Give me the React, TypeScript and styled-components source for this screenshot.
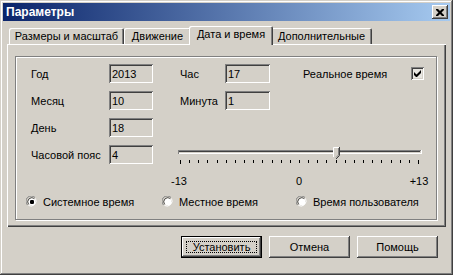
import React from 'react'
import styled, { createGlobalStyle } from 'styled-components'

const FACE = '#d4d0c8'
const SHADOW = '#808080'
const DARK = '#404040'

const tabs = [
  { label: 'Размеры и масштаб', width: 115 },
  { label: 'Движение', width: 67 },
  { label: 'Дата и время', width: 80 },
  { label: 'Дополнительные', width: 101 },
]
const activeTab = 2

const fields = [
  { label: 'Год', value: '2013' },
  { label: 'Месяц', value: '10' },
  { label: 'День', value: '18' },
  { label: 'Часовой пояс', value: '4' },
]

const TICKS = 27
const TICK_SPAN = 238
const SLIDER_VALUE = 4

function Slider() {
  const tickX = (i: number) => 2 + Math.round((i * TICK_SPAN) / (TICKS - 1))
  const tx = tickX(SLIDER_VALUE + 13)
  return (
    <SliderBox>
      <svg width="246" height="20" viewBox="0 0 246 20">
        <rect x="0" y="5" width="243" height="1" fill={SHADOW} />
        <rect x="1" y="6" width="241" height="1" fill={DARK} />
        <rect x="0" y="8" width="244" height="1" fill="#fff" />
        <rect x="0" y="5" width="1" height="4" fill={SHADOW} />
        <rect x="243" y="5" width="1" height="4" fill="#fff" />
        {Array.from({ length: TICKS }, (_, i) => {
          const end = i === 0 || i === TICKS - 1
          return <rect key={i} x={tickX(i)} y="15" width="1" height={end ? 4 : 3} fill="#000" />
        })}
        <polygon points={`${tx - 3},2 ${tx + 3},2 ${tx + 3},10 ${tx},13 ${tx - 3},10`} fill={FACE} />
        <polyline points={`${tx - 2.5},12 ${tx - 2.5},2.5 ${tx + 3},2.5`} fill="none" stroke="#fff" />
        <polyline points={`${tx + 3.5},2 ${tx + 3.5},10.5 ${tx},14`} fill="none" stroke={DARK} />
        <polyline points={`${tx + 2.5},3 ${tx + 2.5},10 ${tx},12.5`} fill="none" stroke={SHADOW} />
      </svg>
    </SliderBox>
  )
}

function Radio({ checked, label }: { checked?: boolean; label: string }) {
  return (
    <RadioItem>
      <svg width="12" height="12" viewBox="0 0 12 12">
        <path d="M1.5 9 A5 5 0 0 1 9 1.5" fill="none" stroke={SHADOW} />
        <path d="M2.6 8.2 A4 4 0 0 1 8.2 2.6" fill="none" stroke={DARK} />
        <path d="M9.5 2.5 A5.2 5.2 0 0 1 2.5 9.5" fill="none" stroke="#fff" />
        <path d="M8.6 3.4 A4.2 4.2 0 0 1 3.4 8.6" fill="none" stroke={FACE} />
        <circle cx="6" cy="6" r="3.4" fill="#fff" />
        {checked && <rect x="4" y="4" width="4" height="4" rx="1.2" fill="#000" />}
      </svg>
      {label}
    </RadioItem>
  )
}

export default function App() {
  return (
    <>
      <GlobalStyle />
      <Window>
        <TitleBar>
          <Title>Параметры</Title>
          <CloseButton>
            <svg width="8" height="7" viewBox="0 0 8 7">
              <path d="M0 0h2l2 2 2-2h2v1L5.5 3.5 8 6v1H6L4 5 2 7H0V6l2.5-2.5L0 1z" fill="#000" />
            </svg>
          </CloseButton>
        </TitleBar>
        <Body>
          <TabStrip>
            {tabs.map((t, i) => (
              <Tab key={t.label} $w={t.width} $active={i === activeTab}>
                {t.label}
              </Tab>
            ))}
          </TabStrip>
          <Panel>
            <GroupBox>
              <FieldGrid>
                {fields.map((f, i) => (
                  <React.Fragment key={f.label}>
                    <Label style={{ gridRow: i + 1 }}>{f.label}</Label>
                    <Field style={{ gridRow: i + 1 }}>{f.value}</Field>
                  </React.Fragment>
                ))}
                <Label $col={4} style={{ gridRow: 1 }}>Час</Label>
                <Field $col={5} style={{ gridRow: 1 }}>17</Field>
                <Label $col={4} style={{ gridRow: 2 }}>Минута</Label>
                <Field $col={5} style={{ gridRow: 2 }}>1</Field>
                <Label $col={7} style={{ gridRow: 1 }}>Реальное время</Label>
                <CheckBox>
                  <svg width="7" height="7" viewBox="0 0 7 7">
                    <path d="M0 2v3l2 2h1l4-4V0L2.5 4.5z" fill="#000" />
                  </svg>
                </CheckBox>
                <Slider />
              </FieldGrid>
              <ScaleRow>
                <ScaleLabel>-13</ScaleLabel>
                <ScaleLabel>0</ScaleLabel>
                <ScaleLabel>+13</ScaleLabel>
              </ScaleRow>
              <RadioRow>
                <Radio checked label="Системное время" />
                <Radio label="Местное время" />
                <Radio label="Время пользователя" />
              </RadioRow>
            </GroupBox>
          </Panel>
          <ButtonRow>
            <Button $default>
              <FocusRect>Установить</FocusRect>
            </Button>
            <Button>Отмена</Button>
            <Button>Помощь</Button>
          </ButtonRow>
        </Body>
      </Window>
    </>
  )
}

const GlobalStyle = createGlobalStyle`
  html, body {
    margin: 0;
    padding: 0;
    background: ${FACE};
  }
  body {
    font-family: 'Liberation Sans', Arial, sans-serif;
    font-size: 11px;
    color: #000;
  }
`

const Window = styled.div`
  box-sizing: border-box;
  width: 453px;
  height: 275px;
  padding: 3px;
  background: ${FACE};
  box-shadow: inset -1px -1px ${DARK}, inset 1px 1px ${FACE}, inset -2px -2px ${SHADOW}, inset 2px 2px #fff;
  display: flex;
  flex-direction: column;
`

const TitleBar = styled.div`
  height: 18px;
  display: flex;
  align-items: center;
  justify-content: space-between;
  padding: 0 2px 0 3px;
  background: linear-gradient(to right, #0a246a, #a6caf0);
`

const Title = styled.div`
  color: #fff;
  font-weight: bold;
  font-size: 12px;
`

const CloseButton = styled.div`
  box-sizing: border-box;
  width: 16px;
  height: 14px;
  display: flex;
  align-items: center;
  justify-content: center;
  background: ${FACE};
  box-shadow: inset -1px -1px ${DARK}, inset 1px 1px #fff, inset -2px -2px ${SHADOW};
`

const Body = styled.div`
  padding: 5px 4px 0;
  display: flex;
  flex-direction: column;
`

const TabStrip = styled.div`
  height: 18px;
  display: flex;
  align-items: flex-end;
  padding-left: 2px;
  position: relative;
  z-index: 1;
`

const Tab = styled.div<{ $w: number; $active?: boolean }>`
  box-sizing: border-box;
  width: ${(p) => p.$w + (p.$active ? 4 : 0)}px;
  height: ${(p) => (p.$active ? 19 : 16)}px;
  margin: ${(p) => (p.$active ? '0 -2px -1px' : '0')};
  padding-bottom: ${(p) => (p.$active ? 3 : 0)}px;
  display: flex;
  align-items: center;
  justify-content: center;
  white-space: nowrap;
  background: ${FACE};
  border-radius: 2px 2px 0 0;
  box-shadow: inset 1px 1px #fff, inset -1px 0 ${DARK}, inset -2px 0 ${SHADOW};
  position: relative;
  z-index: ${(p) => (p.$active ? 2 : 1)};
`

const Panel = styled.div`
  box-sizing: border-box;
  height: 183px;
  padding: 12px 9px 7px 8px;
  box-shadow: inset 1px 1px #fff, inset -1px -1px ${DARK}, inset -2px -2px ${SHADOW};
  position: relative;
  z-index: 0;
`

const GroupBox = styled.div`
  box-sizing: border-box;
  height: 164px;
  padding: 7px 0 0 10px;
  border: 1px solid ${SHADOW};
  box-shadow: inset 1px 1px #fff, 1px 1px #fff;
`

const FieldGrid = styled.div`
  margin-left: 5px;
  display: grid;
  grid-template-columns: 78px 44px 27px 45px 45px 33px 108px 13px;
  grid-template-rows: repeat(4, 19px);
  row-gap: 8px;
  align-items: center;
`

const Label = styled.div<{ $col?: number }>`
  grid-column: ${(p) => p.$col ?? 1};
  white-space: nowrap;
`

const Field = styled.div<{ $col?: number }>`
  grid-column: ${(p) => p.$col ?? 2};
  box-sizing: border-box;
  height: 19px;
  padding: 0 3px;
  display: flex;
  align-items: center;
  background: ${FACE};
  box-shadow: inset 1px 1px ${SHADOW}, inset -1px -1px #fff, inset 2px 2px ${DARK}, inset -2px -2px ${FACE};
`

const CheckBox = styled.div`
  grid-column: 8;
  grid-row: 1;
  box-sizing: border-box;
  width: 13px;
  height: 13px;
  display: flex;
  align-items: center;
  justify-content: center;
  background: #e8e6e1;
  box-shadow: inset 1px 1px ${SHADOW}, inset -1px -1px #fff, inset 2px 2px ${DARK}, inset -2px -2px ${FACE};
`

const SliderBox = styled.div`
  grid-column: 4 / 9;
  grid-row: 4;
  align-self: start;
  margin-left: -2px;
  height: 19px;
  svg {
    display: block;
  }
`

const ScaleRow = styled.div`
  margin: 11px 0 0 138px;
  width: 270px;
  display: flex;
  justify-content: space-between;
`

const ScaleLabel = styled.div`
  width: 30px;
  text-align: center;
  line-height: 13px;
`

const RadioRow = styled.div`
  margin-top: 7px;
  display: grid;
  grid-template-columns: 136px 134px auto;
  height: 14px;
  align-items: center;
`

const RadioItem = styled.div`
  display: flex;
  align-items: center;
  gap: 5px;
  white-space: nowrap;
  svg {
    display: block;
  }
`

const ButtonRow = styled.div`
  margin-top: 9px;
  padding-right: 8px;
  display: flex;
  justify-content: flex-end;
  gap: 7px;
`

const Button = styled.div<{ $default?: boolean }>`
  box-sizing: border-box;
  width: 81px;
  height: 22px;
  display: flex;
  align-items: center;
  justify-content: center;
  padding: ${(p) => (p.$default ? '4px' : '0')};
  background: ${FACE};
  border: ${(p) => (p.$default ? '1px solid #000' : 'none')};
  box-shadow: inset -1px -1px ${DARK}, inset 1px 1px #fff, inset -2px -2px ${SHADOW}, inset 2px 2px ${FACE};
`

const FocusRect = styled.div`
  flex: 1;
  align-self: stretch;
  display: flex;
  align-items: center;
  justify-content: center;
  outline: 1px dotted #000;
  outline-offset: -1px;
`
